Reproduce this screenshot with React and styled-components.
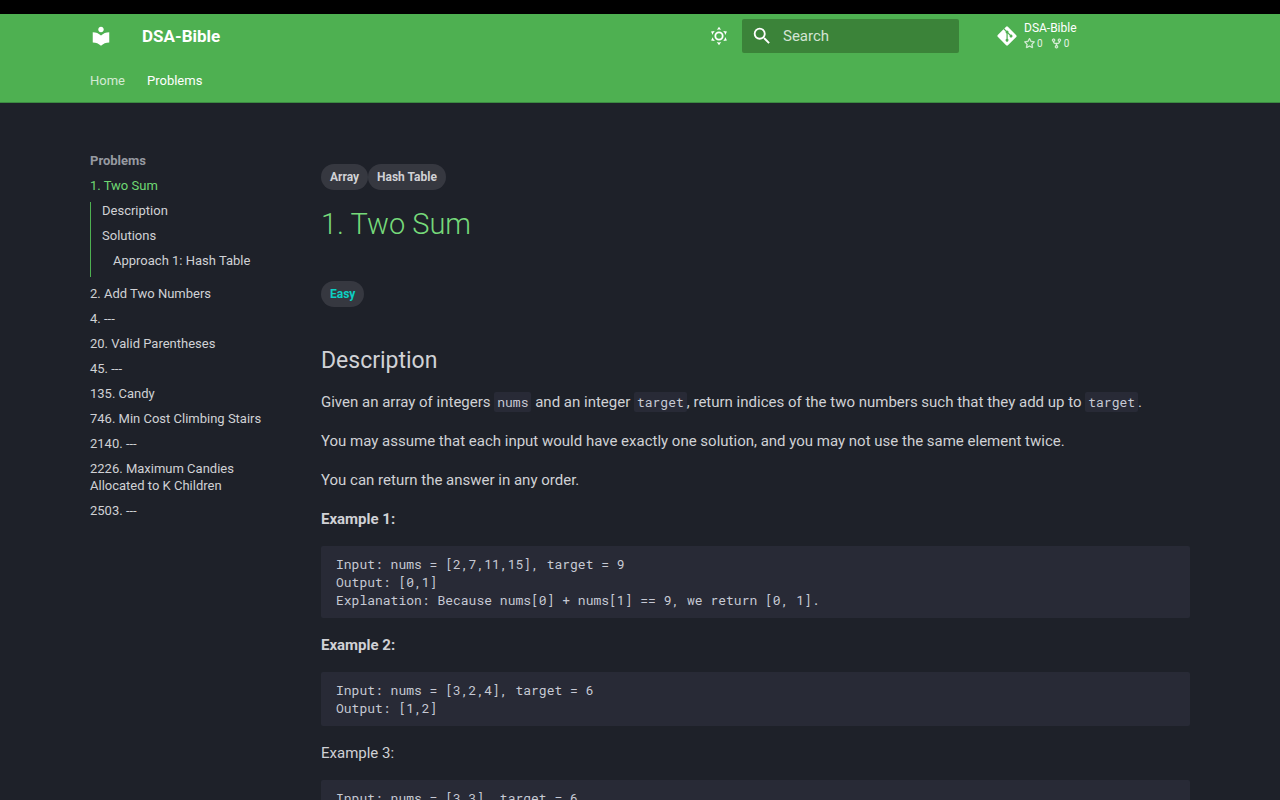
import React from "react";
import styled, { createGlobalStyle } from "styled-components";
import { MdLocalLibrary } from "react-icons/md";
import { FaGitAlt } from "react-icons/fa6";
import { GoStar, GoRepoForked } from "react-icons/go";

const mono = `"Roboto Mono", "Liberation Mono", monospace`;

const GlobalStyle = createGlobalStyle`
  *, *::before, *::after { box-sizing: border-box; }
  body {
    margin: 0;
    background: #1e2129;
    color: #d0d1d5;
    font: 15px/24px Roboto, sans-serif;
    -webkit-font-smoothing: antialiased;
  }
  a { color: inherit; text-decoration: none; }
`;

const TopStrip = styled.div`
  height: 14px;
  background: #000;
`;

const Header = styled.header`
  background: #4eb051;
  color: #fff;
  border-bottom: 1px solid #3c8a42;
`;

const Container = styled.div`
  max-width: 1280px;
  margin: 0 auto;
  padding: 0 90px;
`;

const HeaderRow = styled(Container)`
  display: flex;
  align-items: center;
  height: 44px;
`;

const Logo = styled.a`
  display: flex;
  margin-right: 30px;
  svg { width: 22px; height: 22px; }
`;

const SiteTitle = styled.span`
  flex: 1;
  font-size: 17px;
  font-weight: 700;
`;

const ThemeButton = styled.button`
  display: flex;
  margin: 0 12px 0 0;
  padding: 0;
  border: 0;
  background: none;
  color: #fff;
  cursor: pointer;
`;

const SearchBox = styled.label`
  display: flex;
  align-items: center;
  gap: 10px;
  width: 217px;
  height: 34px;
  padding: 0 9px;
  border-radius: 2px;
  background: #3b8339;
  input {
    flex: 1;
    min-width: 0;
    padding: 0;
    border: 0;
    outline: 0;
    background: none;
    color: #fff;
    font: inherit;
  }
  input::placeholder { color: #d3e4d3; opacity: 1; }
`;

const Source = styled.a`
  display: flex;
  align-items: center;
  gap: 6px;
  width: 194px;
  margin-left: 37px;
  font-size: 12px;
  line-height: 15px;
`;

const Facts = styled.span`
  display: flex;
  gap: 8px;
  font-size: 10px;
  opacity: 0.85;
  span { display: flex; align-items: center; gap: 2px; }
  svg { width: 11px; height: 11px; stroke: currentColor; stroke-width: 1; }
`;

const Tabs = styled(Container).attrs({ as: "nav" })`
  display: flex;
  align-items: flex-end;
  gap: 22px;
  height: 44px;
  padding-bottom: 9px;
  font-size: 13px;
`;

const Tab = styled.a`
  opacity: ${(p) => (p.$active ? 1 : 0.75)};
`;

const Body = styled(Container)`
  display: flex;
`;

const Sidebar = styled.nav`
  flex: none;
  width: 231px;
  padding: 49px 50px 24px 0;
  font-size: 13px;
  line-height: 17px;
`;

const SideTitle = styled.div`
  color: #979aa1;
  font-weight: 700;
`;

const NavList = styled.ul`
  list-style: none;
  margin: 0;
  padding: 0;
`;

const NavItem = styled.li`
  margin-top: 8px;
  color: ${(p) => (p.$active ? "#6fd873" : "inherit")};
`;

const Toc = styled(NavList)`
  margin-top: 8px;
  padding: 0 0 8px 11px;
  border-left: 1px solid #4eb051;
  color: #d0d1d5;
  > li:first-child { margin-top: 0; }
`;

const SubList = styled(NavList)`
  padding-left: 11px;
`;

const Article = styled.main`
  flex: 1;
  min-width: 0;
  padding: 61px 0 24px;
`;

const PillRow = styled.div`
  display: flex;
`;

const Pill = styled.span`
  padding: 0 9px;
  border-radius: 13px;
  background: #363840;
  color: ${(p) => (p.$easy ? "#0ccfc3" : "#d0d1d5")};
  font-size: 12px;
  font-weight: 700;
  line-height: 26px;
`;

const Title = styled.h1`
  margin: 15px 0 38px;
  color: #76d97a;
  font-size: 29px;
  font-weight: 300;
  line-height: 38px;
`;

const Heading = styled.h2`
  margin: 38px 0 14px;
  font-size: 23px;
  font-weight: 400;
  line-height: 31px;
`;

const Text = styled.p`
  margin: 0 0 15px;
`;

const Code = styled.code`
  padding: 1px 3px;
  border-radius: 2px;
  background: #282a36;
  color: #c6c9d4;
  font: 13px/15px ${mono};
`;

const CodeBlock = styled.pre`
  margin: 0 0 15px;
  padding: 9px 15px;
  border-radius: 2px;
  background: #282a36;
  color: #c6c9d4;
  font: 13px/18px ${mono};
  overflow: hidden;
  code { font: inherit; }
`;

const sunPath =
  "M12 7a5 5 0 0 1 5 5 5 5 0 0 1-5 5 5 5 0 0 1-5-5 5 5 0 0 1 5-5m0 2a3 3 0 0 0-3 3 3 3 0 0 0 3 3 3 3 0 0 0 3-3 3 3 0 0 0-3-3m0-7 2.39 3.42C13.65 5.15 12.84 5 12 5s-1.65.15-2.39.42zM3.34 7l4.16-.35A7.2 7.2 0 0 0 5.94 8.5c-.44.74-.69 1.5-.83 2.29zm.02 10 1.76-3.77a7.131 7.131 0 0 0 2.38 4.14zM20.65 7l-1.77 3.79a7.02 7.02 0 0 0-2.38-4.15zm-.01 10-4.14.36c.59-.51 1.12-1.14 1.54-1.86.42-.73.69-1.5.83-2.29zM12 22l-2.41-3.44c.74.27 1.55.44 2.41.44.82 0 1.63-.17 2.37-.44z";
const searchPath =
  "M9.5 3A6.5 6.5 0 0 1 16 9.5c0 1.61-.59 3.09-1.56 4.23l.27.27h.79l5 5-1.5 1.5-5-5v-.79l-.27-.27A6.516 6.516 0 0 1 9.5 16 6.5 6.5 0 0 1 3 9.5 6.5 6.5 0 0 1 9.5 3m0 2C7 5 5 7 5 9.5S7 14 9.5 14 14 12 14 9.5 12 5 9.5 5";

const Icon = ({ d }) => (
  <svg width="22" height="22" viewBox="0 0 24 24" fill="currentColor" aria-hidden="true">
    <path d={d} />
  </svg>
);

const problems = [
  "2. Add Two Numbers",
  "4. ---",
  "20. Valid Parentheses",
  "45. ---",
  "135. Candy",
  "746. Min Cost Climbing Stairs",
  "2140. ---",
  "2226. Maximum Candies Allocated to K Children",
  "2503. ---",
];

const examples = [
  {
    title: <strong>Example 1:</strong>,
    code: "Input: nums = [2,7,11,15], target = 9\nOutput: [0,1]\nExplanation: Because nums[0] + nums[1] == 9, we return [0, 1].",
  },
  { title: <strong>Example 2:</strong>, code: "Input: nums = [3,2,4], target = 6\nOutput: [1,2]" },
  { title: "Example 3:", code: "Input: nums = [3,3], target = 6\nOutput: [0,1]" },
];

export default function App() {
  return (
    <>
      <GlobalStyle />
      <TopStrip />
      <Header>
        <HeaderRow>
          <Logo href="#" aria-label="DSA-Bible"><MdLocalLibrary /></Logo>
          <SiteTitle>DSA-Bible</SiteTitle>
          <ThemeButton aria-label="Switch theme"><Icon d={sunPath} /></ThemeButton>
          <SearchBox>
            <Icon d={searchPath} />
            <input type="text" placeholder="Search" aria-label="Search" />
          </SearchBox>
          <Source href="#">
            <FaGitAlt size={22} />
            <span>
              DSA-Bible
              <Facts>
                <span><GoStar />0</span>
                <span><GoRepoForked />0</span>
              </Facts>
            </span>
          </Source>
        </HeaderRow>
        <Tabs>
          <Tab href="#">Home</Tab>
          <Tab href="#" $active>Problems</Tab>
        </Tabs>
      </Header>
      <Body>
        <Sidebar aria-label="Problems">
          <SideTitle>Problems</SideTitle>
          <NavList>
            <NavItem $active>
              <a href="#">1. Two Sum</a>
              <Toc>
                <NavItem><a href="#description">Description</a></NavItem>
                <NavItem>
                  <a href="#solutions">Solutions</a>
                  <SubList>
                    <NavItem><a href="#approach-1">Approach 1: Hash Table</a></NavItem>
                  </SubList>
                </NavItem>
              </Toc>
            </NavItem>
            {problems.map((name) => (
              <NavItem key={name}><a href="#">{name}</a></NavItem>
            ))}
          </NavList>
        </Sidebar>
        <Article>
          <PillRow>
            <Pill>Array</Pill>
            <Pill>Hash Table</Pill>
          </PillRow>
          <Title>1. Two Sum</Title>
          <PillRow>
            <Pill $easy>Easy</Pill>
          </PillRow>
          <Heading id="description">Description</Heading>
          <Text>
            Given an array of integers <Code>nums</Code> and an integer <Code>target</Code>, return
            indices of the two numbers such that they add up to <Code>target</Code>.
          </Text>
          <Text>
            You may assume that each input would have exactly one solution, and you may not use the
            same element twice.
          </Text>
          <Text>You can return the answer in any order.</Text>
          {examples.map((example) => (
            <React.Fragment key={example.code}>
              <Text>{example.title}</Text>
              <CodeBlock><code>{example.code}</code></CodeBlock>
            </React.Fragment>
          ))}
        </Article>
      </Body>
    </>
  );
}
